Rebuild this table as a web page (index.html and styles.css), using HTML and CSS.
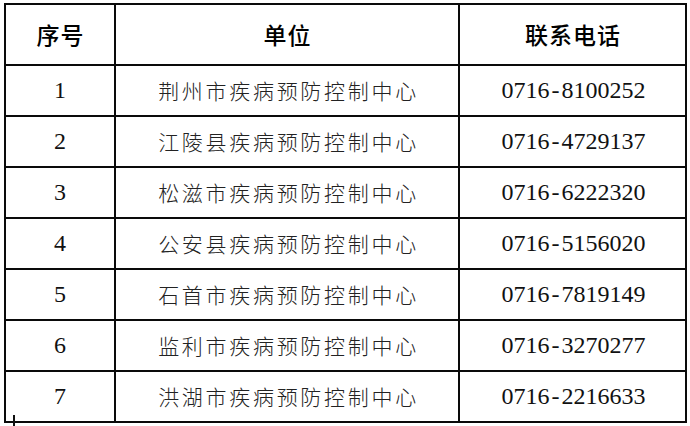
FILE: index.html
```html
<!DOCTYPE html>
<html lang="zh-CN">
<head>
<meta charset="utf-8">
<title>疾病预防控制中心联系电话</title>
<link rel="stylesheet" href="styles.css">
</head>
<body>
<div class="page">
  <div class="grid">
    <div class="cell head">序号</div>
    <div class="cell head">单位</div>
    <div class="cell head">联系电话</div>

    <div class="cell num">1</div>
    <div class="cell unit">荆州市疾病预防控制中心</div>
    <div class="cell tel">0716<span class="dash">-</span>8100252</div>

    <div class="cell num">2</div>
    <div class="cell unit">江陵县疾病预防控制中心</div>
    <div class="cell tel">0716<span class="dash">-</span>4729137</div>

    <div class="cell num">3</div>
    <div class="cell unit">松滋市疾病预防控制中心</div>
    <div class="cell tel">0716<span class="dash">-</span>6222320</div>

    <div class="cell num">4</div>
    <div class="cell unit">公安县疾病预防控制中心</div>
    <div class="cell tel">0716<span class="dash">-</span>5156020</div>

    <div class="cell num">5</div>
    <div class="cell unit">石首市疾病预防控制中心</div>
    <div class="cell tel">0716<span class="dash">-</span>7819149</div>

    <div class="cell num">6</div>
    <div class="cell unit">监利市疾病预防控制中心</div>
    <div class="cell tel">0716<span class="dash">-</span>3270277</div>

    <div class="cell num">7</div>
    <div class="cell unit">洪湖市疾病预防控制中心</div>
    <div class="cell tel">0716<span class="dash">-</span>2216633</div>
  </div>
  <span class="mark"></span>
</div>
</body>
</html>
```

FILE: styles.css
```css
html, body {
  margin: 0;
  padding: 0;
  background: #ffffff;
}

.page {
  position: relative;
  width: 690px;
  height: 426px;
  padding: 3px 0 0 4px;
  box-sizing: border-box;
}

.grid {
  display: grid;
  grid-template-columns: 110px 344px 227px;
  grid-template-rows: 61px repeat(7, 51px);
  border-left: 2px solid #0a0a0a;
  border-top: 2px solid #0a0a0a;
  width: max-content;
}

.cell {
  box-sizing: border-box;
  border-right: 2px solid #0a0a0a;
  border-bottom: 2px solid #0a0a0a;
  display: flex;
  align-items: center;
  justify-content: center;
  white-space: nowrap;
}

.head {
  font-family: "Noto Sans CJK SC", "Noto Sans", sans-serif;
  font-weight: 500;
  font-size: 23px;
  letter-spacing: 1px;
  color: #000;
  padding-left: 1px;
  padding-bottom: 2px;
}

.num {
  font-family: "Liberation Serif", "Times New Roman", serif;
  font-size: 24px;
  color: #111;
  padding-bottom: 1px;
}

.unit {
  font-family: "Noto Sans CJK SC", "Noto Sans", sans-serif;
  font-weight: 300;
  font-size: 21px;
  letter-spacing: 2.7px;
  color: #222;
  padding-left: 3px;
  padding-bottom: 1px;
}

.tel {
  font-family: "Liberation Serif", "Times New Roman", serif;
  font-size: 24px;
  color: #111;
  padding-left: 2px;
  padding-bottom: 1px;
}

.dash {
  display: inline-block;
  width: 12px;
  text-align: center;
}

.mark {
  position: absolute;
  left: 13px;
  top: 415px;
  width: 2px;
  height: 11px;
  background: #111;
}
```
